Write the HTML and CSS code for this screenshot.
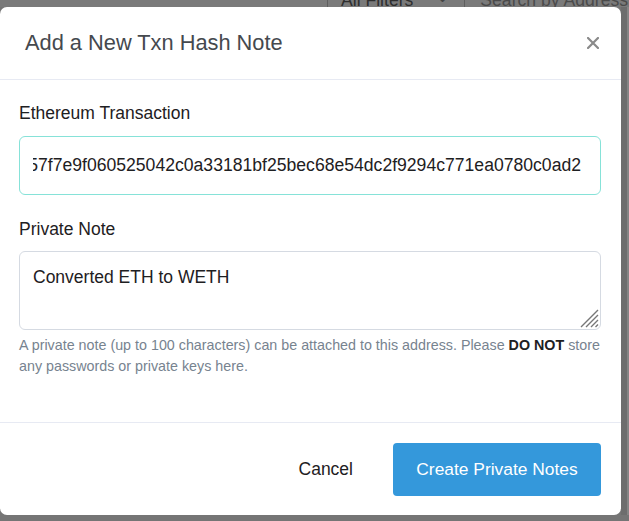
FILE: index.html
```html
<!DOCTYPE html>
<html lang="en">
<head>
<meta charset="utf-8">
<title>Add a New Txn Hash Note</title>
<link rel="stylesheet" href="styles.css">
</head>
<body>
<div class="backdrop">
  <div class="pagebar">
    <div class="pagebar-inner">
      <span class="divider"></span>
      <span class="filter">All Filters</span>
      <span class="chev">&#8964;</span>
      <span class="divider"></span>
      <span class="search">Search by Address</span>
    </div>
  </div>
  <div class="stage">
    <div class="modal">
      <div class="modal-header">
        <h5 class="modal-title">Add a New Txn Hash Note</h5>
        <span class="close" aria-label="Close">
          <svg width="12" height="12" viewBox="0 0 12 12"><path d="M1 1 L11 11 M11 1 L1 11" stroke="#8a8a8a" stroke-width="2.2" stroke-linecap="square"/></svg>
        </span>
      </div>
      <div class="modal-body">
        <label class="field-label">Ethereum Transaction</label>
        <div class="input focus"><div class="input-clip"><span class="input-text">0x1d4c5b357f7e9f060525042c0a33181bf25bec68e54dc2f9294c771ea0780c0ad2</span></div></div>
        <label class="field-label second">Private Note</label>
        <div class="textarea">
          <span class="textarea-text">Converted ETH to WETH</span>
          <svg class="grip" width="19" height="19" viewBox="0 0 19 19"><path d="M1 18 L18 1 M6 18 L18 6 M11 18 L18 11 M15.5 18 L18 15.5" stroke="#777777" stroke-width="1.4"/></svg>
        </div>
        <p class="help">A private note (up to 100 characters) can be attached to this address. Please <b>DO NOT</b> store any passwords or private keys here.</p>
      </div>
      <div class="modal-footer">
        <span class="btn-link">Cancel</span>
        <span class="btn-primary">Create Private Notes</span>
      </div>
    </div>
    <div class="side-strip"></div>
  </div>
</div>
</body>
</html>
```
FILE: styles.css
```css
html, body {
  margin: 0;
  padding: 0;
}
body {
  width: 629px;
  height: 521px;
  overflow: hidden;
  background: #757575;
  font-family: "Liberation Sans", Arial, sans-serif;
}
.backdrop {
  display: flex;
  flex-direction: column;
  height: 521px;
}
.pagebar {
  height: 7px;
  overflow: hidden;
  background: #7a7a7a;
}
.pagebar-inner {
  display: flex;
  align-items: flex-start;
  margin-top: -10px;
  padding-left: 327px;
  font-size: 17.6px;
  line-height: 20px;
  color: #2e2e2e;
}
.divider {
  width: 1px;
  height: 30px;
  background: #5e5e5e;
}
.filter {
  margin-left: 13px;
}
.chev {
  margin-left: 22px;
  margin-top: -4px;
  color: #444;
}
.chev + .divider {
  margin-left: 14px;
}
.search {
  margin-left: 15px;
  white-space: nowrap;
  color: #4a4a4a;
}
.stage {
  display: flex;
  height: 508px;
}
.modal {
  width: 621px;
  flex: none;
  background: #ffffff;
  border-radius: 7px;
  display: flex;
  flex-direction: column;
}
.side-strip {
  flex: 1;
  background: #6d6d6d;
  border-right: 2px solid #858585;
}
.modal-header {
  height: 73px;
  box-sizing: border-box;
  display: flex;
  align-items: center;
  justify-content: space-between;
  padding: 0 22px 0 25px;
  border-bottom: 1px solid #e7eaf3;
}
.modal-title {
  margin: 0;
  font-size: 21.8px;
  font-weight: normal;
  color: #45494e;
  line-height: 1.5;
}
.close {
  display: flex;
  margin-top: 0;
}
.modal-body {
  padding: 20px 20px 45px 19px;
  display: flex;
  flex-direction: column;
}
.field-label {
  font-size: 17.5px;
  line-height: 26px;
  color: #1e2022;
}
.field-label.second {
  margin-top: 21px;
}
.input {
  margin-top: 10px;
  height: 59px;
  box-sizing: border-box;
  border: 1px solid #d5dae2;
  border-radius: 6px;
  display: flex;
  align-items: center;
  padding: 0 19px 0 13px;
}
.input.focus {
  border-color: #86e2d8;
}
.input-clip {
  flex: 1;
  min-width: 0;
  display: flex;
  justify-content: flex-end;
  overflow: hidden;
}
.input-text {
  white-space: nowrap;
  font-size: 17.6px;
  color: #1e2022;
  flex: none;
}
.textarea {
  position: relative;
  margin-top: 9px;
  height: 79px;
  box-sizing: border-box;
  border: 1px solid #d5dae2;
  border-radius: 6px;
  padding: 12px 13px;
}
.textarea-text {
  font-size: 17.5px;
  line-height: 26px;
  color: #1e2022;
}
.grip {
  position: absolute;
  right: 1px;
  bottom: 1px;
}
.help {
  margin: 5px 0 0 0;
  font-size: 14.3px;
  line-height: 21px;
  color: #77838f;
}
.help b {
  color: #1e2022;
}
.modal-footer {
  flex: 1;
  border-top: 1px solid #e7eaf3;
  display: flex;
  justify-content: flex-end;
  align-items: flex-start;
  gap: 40px;
  padding: 20px 20px 0 0;
}
.btn-link {
  height: 53px;
  display: flex;
  align-items: center;
  font-size: 17.5px;
  color: #1e2022;
}
.btn-primary {
  height: 53px;
  box-sizing: border-box;
  width: 208px;
  display: flex;
  align-items: center;
  justify-content: center;
  background: #3498db;
  border-radius: 4px;
  color: #ffffff;
  font-size: 17.4px;
}
```
